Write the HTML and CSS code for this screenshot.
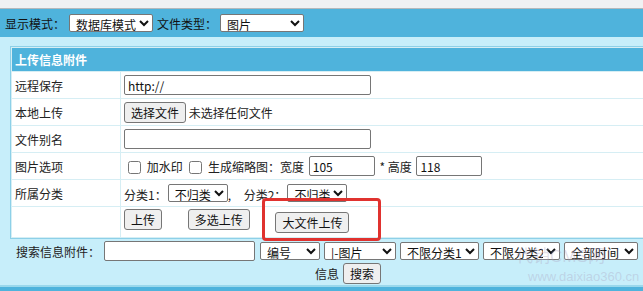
FILE: index.html
```html
<!DOCTYPE html>
<html lang="zh-CN">
<head>
    <meta charset="UTF-8">
    <title>上传信息附件</title>
    <link rel="stylesheet" href="styles.css">
</head>
<body>
    <div class="topstrip"></div>
    <div class="toolbar">
        显示模式：
        <select class="sel-mode"><option>数据库模式</option></select>
        文件类型：
        <select class="sel-type"><option>图片</option></select>
    </div>
    <div class="main">
        <table class="upload">
            <tr class="head"><td colspan="2">上传信息附件</td></tr>
            <tr>
                <td class="label">远程保存</td>
                <td><input type="text" class="txt-url" value="http://"></td>
            </tr>
            <tr>
                <td class="label">本地上传</td>
                <td><button class="btn">选择文件</button> 未选择任何文件</td>
            </tr>
            <tr>
                <td class="label">文件别名</td>
                <td><input type="text" class="txt-url"></td>
            </tr>
            <tr>
                <td class="label">图片选项</td>
                <td class="opts">
                    <input type="checkbox"> 加水印
                    <input type="checkbox" class="cb2"> 生成缩略图：宽度
                    <input type="text" class="txt-num" value="105">
                    * 高度
                    <input type="text" class="txt-num" value="118">
                </td>
            </tr>
            <tr>
                <td class="label">所属分类</td>
                <td class="cats">
                    分类1：<select class="sel-cat"><option>不归类</option></select>,
                    <span class="cat2">分类2：</span><select class="sel-cat"><option>不归类</option></select>
                </td>
            </tr>
            <tr class="last">
                <td class="label"></td>
                <td class="actions">
                    <button class="btn">上传</button>
                    <button class="btn">多选上传</button>
                    <span class="mark"><button class="btn">大文件上传</button></span>
                </td>
            </tr>
        </table>

        <div class="search">
            <div class="search-line">
                <span class="search-label">搜索信息附件：</span>
                <input type="text" class="txt-key">
                <select class="sel-field"><option>编号</option></select>
                <select class="sel-class"><option>|-图片</option></select>
                <select class="sel-c1"><option>不限分类1</option></select>
                <select class="sel-c2"><option>不限分类2</option></select>
                <select class="sel-time"><option>全部时间</option></select>
            </div>
            <div class="search-line second">
                信息 <button class="btn">搜索</button>
            </div>
            <div class="watermark">
                <span class="wm-top">代销CMS网</span>
                <span class="wm-url">www.daixiao360.cn</span>
            </div>
        </div>
    </div>
    <div class="footbar"></div>
</body>
</html>
```

FILE: styles.css
```css
body {
    margin: 0;
    width: 643px;
    height: 291px;
    overflow: hidden;
    font-family: "Noto Sans CJK SC", "Microsoft YaHei", sans-serif;
    font-size: 12px;
    color: #222;
    background: #c7eefa;
}

select, input, button {
    font-family: "Noto Sans CJK SC", sans-serif;
    font-size: 12px;
    color: #111;
    box-sizing: border-box;
    margin: 0;
}

select {
    height: 18px;
    padding: 0 0 0 2px;
    border: 1px solid #767676;
    border-radius: 2px;
    background: #fff;
}

input[type=text] {
    height: 20px;
    border: 1px solid #767676;
    border-radius: 2px;
    padding: 0 3px;
    background: #fff;
}

input[type=checkbox] {
    width: 13px;
    height: 13px;
    margin: 0 3px 0 4px;
    vertical-align: -2px;
}

.btn {
    height: 21px;
    padding: 0 6px;
    border: 1px solid #767676;
    border-radius: 3px;
    background: #efefef;
}

.topstrip {
    height: 8px;
    background: #f0f1f3;
    border-bottom: 1px solid #b4b8bc;
}

.toolbar {
    height: 28px;
    display: flex;
    align-items: center;
    padding-left: 5px;
    background: #4fb3dc;
    color: #111;
}

.sel-mode {
    width: 84px;
    margin: 0 4px 0 4px;
}

.sel-type {
    width: 84px;
    margin-left: 3px;
}

.main {
    padding: 9px 0 0 10px;
    height: 248px;
    box-sizing: border-box;
    position: relative;
}

.upload {
    width: 700px;
    border-collapse: separate;
    border-spacing: 1px;
    background: #d6eef4;
    border: 1px solid #8dd0e8;
    border-right: 0;
}

.upload td {
    background: #fff;
    height: 26px;
    padding: 0 3px;
    vertical-align: middle;
}

.upload .head td {
    background: #4fb3dc;
    color: #fff;
    font-weight: bold;
    height: 23px;
}

.upload .label {
    width: 102px;
}

.upload .last td {
    height: 30px;
}

.txt-url {
    width: 247px;
}

.txt-num {
    width: 66px;
    margin: 0 2px 0 2px;
}

.cb2 {
    margin-left: 8px;
}

.sel-cat {
    width: 60px;
    margin-left: 1px;
}

.cat2 {
    margin-left: 10px;
}

.upload .cats {
    height: 24px;
}

.actions .btn:nth-child(2) {
    margin-left: 23px;
}

.mark {
    display: inline-block;
    margin-left: 10px;
    padding: 11px 29px 5px 10px;
    margin-top: -12px;
    margin-bottom: -6px;
    border: 3px solid #e0322f;
    border-radius: 4px;
    vertical-align: middle;
}

.search {
    padding: 2px 0 0 6px;
}

.search-line {
    display: flex;
    align-items: center;
    gap: 4px;
}

.txt-key {
    width: 151px;
    margin-right: 1px;
}

.sel-field { width: 60px; }
.sel-class { width: 72px; }
.sel-c1 { width: 79px; }
.sel-c2 { width: 77px; }
.sel-time { width: 74px; }

.search-line.second {
    padding-left: 299px;
    margin-top: 2px;
}

.watermark {
    position: absolute;
    left: 506px;
    top: 205px;
    display: flex;
    flex-direction: column;
    font-family: "Liberation Sans", sans-serif;
    color: rgba(170, 160, 190, 0.35);
    pointer-events: none;
}

.wm-top {
    font-size: 17px;
    margin-left: 10px;
}

.wm-url {
    font-size: 13px;
    margin-left: 22px;
    margin-top: 2px;
}

.footbar {
    height: 4px;
    border-top: 2px solid #9ad8ec;
    background: #4fb3dc;
}
```
